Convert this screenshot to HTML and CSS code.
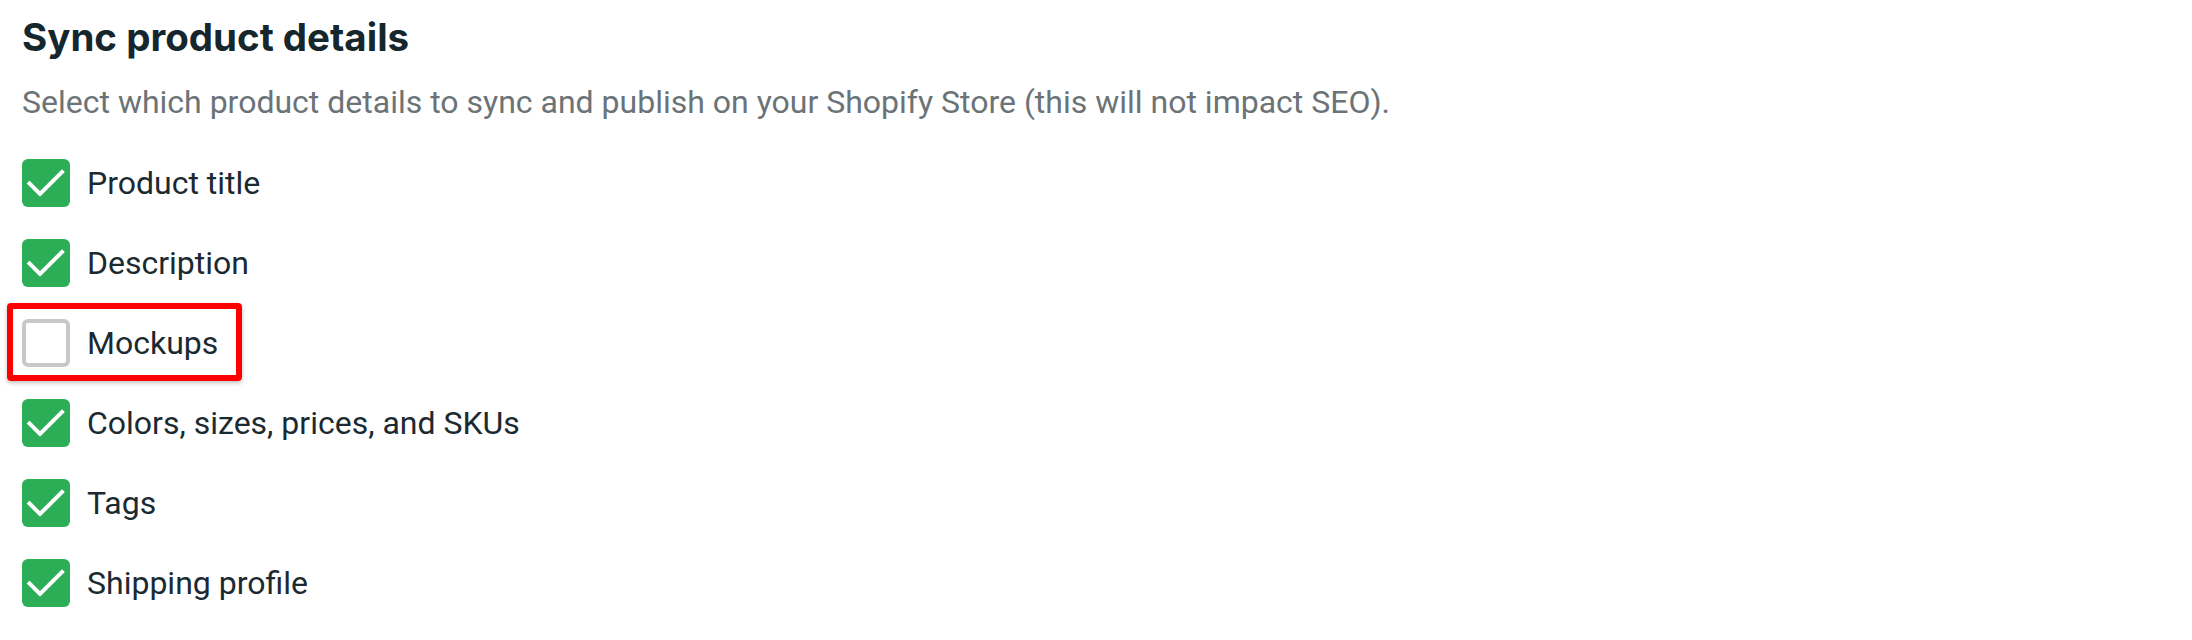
FILE: index.html
```html
<!DOCTYPE html>
<html lang="en">
<head>
<meta charset="utf-8">
<title>Sync product details</title>
<link rel="stylesheet" href="styles.css">
</head>
<body>
<section class="panel">
  <h2 class="title">Sync product details</h2>
  <p class="subtitle">Select which product details to sync and publish on your Shopify Store (this will not impact SEO).</p>
  <ul class="options">
    <li class="option">
      <span class="box checked"><svg viewBox="0 0 48 48" class="tick"><path d="M7.5 24.5 L18 35 L40 13"/></svg></span>
      <span class="label">Product title</span>
    </li>
    <li class="option">
      <span class="box checked"><svg viewBox="0 0 48 48" class="tick"><path d="M7.5 24.5 L18 35 L40 13"/></svg></span>
      <span class="label">Description</span>
    </li>
    <li class="option highlighted">
      <span class="box"></span>
      <span class="label">Mockups</span>
      <span class="annotation"></span>
    </li>
    <li class="option">
      <span class="box checked"><svg viewBox="0 0 48 48" class="tick"><path d="M7.5 24.5 L18 35 L40 13"/></svg></span>
      <span class="label">Colors, sizes, prices, and SKUs</span>
    </li>
    <li class="option">
      <span class="box checked"><svg viewBox="0 0 48 48" class="tick"><path d="M7.5 24.5 L18 35 L40 13"/></svg></span>
      <span class="label">Tags</span>
    </li>
    <li class="option">
      <span class="box checked"><svg viewBox="0 0 48 48" class="tick"><path d="M7.5 24.5 L18 35 L40 13"/></svg></span>
      <span class="label">Shipping profile</span>
    </li>
  </ul>
</section>
</body>
</html>
```

FILE: styles.css
```css
html, body {
  margin: 0;
  padding: 0;
  background: #ffffff;
}

.panel {
  padding: 14px 0 0 22px;
}

.title {
  margin: 0;
  font-family: "Inter", "Liberation Sans", sans-serif;
  font-weight: 700;
  font-size: 38.5px;
  line-height: 46px;
  color: #15262d;
}

.subtitle {
  margin: 22px 0 0 0;
  font-family: "Roboto", "Liberation Sans", sans-serif;
  font-size: 32px;
  line-height: 40px;
  color: #6b7377;
}

.options {
  list-style: none;
  margin: 37px 0 0 0;
  padding: 0;
  display: flex;
  flex-direction: column;
  gap: 32px;
}

.option {
  display: flex;
  align-items: center;
  gap: 17px;
  height: 48px;
}

.highlighted {
  position: relative;
}

.box {
  box-sizing: border-box;
  width: 48px;
  height: 48px;
  flex: 0 0 48px;
  border-radius: 6px;
  border: 4px solid #c8c8c8;
  background: #ffffff;
  display: flex;
}

.box.checked {
  border: none;
  background: #2bae56;
}

.tick {
  width: 48px;
  height: 48px;
  fill: none;
  stroke: #ffffff;
  stroke-width: 4;
  stroke-linecap: square;
  stroke-linejoin: miter;
}

.label {
  font-family: "Roboto", "Liberation Sans", sans-serif;
  font-size: 32px;
  line-height: 40px;
  color: #1b2a31;
}

.annotation {
  position: absolute;
  left: -15px;
  top: -16px;
  width: 235px;
  height: 78px;
  box-sizing: border-box;
  border: 6px solid #ff0000;
  border-radius: 4px;
  box-shadow: 0 2px 4px rgba(0, 0, 0, 0.25);
  pointer-events: none;
}
```
